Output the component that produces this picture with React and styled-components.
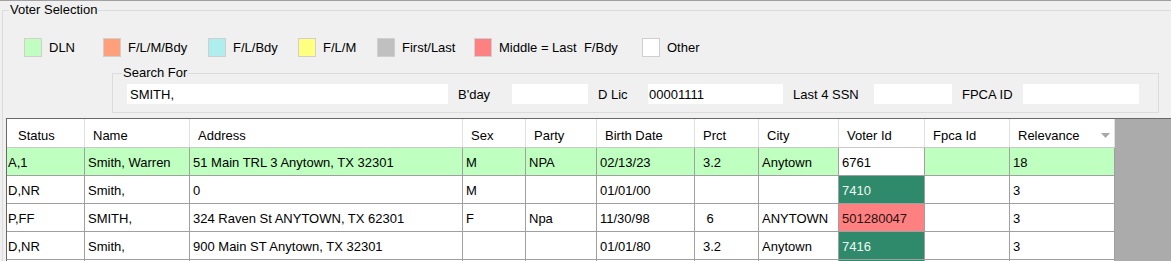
import React from "react";
import styled, { createGlobalStyle } from "styled-components";

const Global = createGlobalStyle`
  html, body { margin: 0; padding: 0; background: #f0f0f0; }
  body { font-family: "Liberation Sans", Arial, sans-serif; font-size: 13px; color: #000; }
  * { box-sizing: border-box; }
`;

const Page = styled.div`
  width: 1171px;
  height: 261px;
  overflow: hidden;
  background: #f0f0f0;
  border-top: 1px solid #a0a0a0;
`;

const GroupBox = styled.fieldset`
  margin: 1px 0 0 2px;
  padding: 0;
  width: 1190px;
  height: 400px;
  min-width: 0;
  border: 1px solid #dcdcdc;
`;

const GroupTitle = styled.legend`
  margin-left: ${(p) => p.$indent}px;
  padding: 0 1px;
  line-height: 16px;
  font-size: 13px;
  color: #000;
`;

const LegendRow = styled.div`
  display: flex;
  align-items: center;
  height: 18px;
  margin-top: 20px;
  padding-left: 21px;
`;

const LegendItem = styled.div`
  display: flex;
  align-items: center;
  gap: 7px;
  width: ${(p) => p.$w}px;
  flex: none;
  white-space: pre;
`;

const Swatch = styled.span`
  width: 18px;
  height: 19px;
  flex: none;
  background: ${(p) => p.$c};
  border: 1px solid #cfcfcf;
`;

const SearchBox = styled.fieldset`
  margin: 9px 0 0 109px;
  padding: 3px 0 8px 0;
  width: 1047px;
  min-width: 0;
  border: 1px solid #dcdcdc;
`;

const FieldRow = styled.div`
  display: flex;
  align-items: center;
  height: 20px;
  margin-left: 14px;
`;

const TextBox = styled.div`
  width: ${(p) => p.$w}px;
  height: 20px;
  flex: none;
  background: #fff;
  padding-left: ${(p) => p.$pad ?? 2}px;
  display: flex;
  align-items: center;
  white-space: pre;
`;

const FieldLabel = styled.span`
  width: ${(p) => p.$w}px;
  flex: none;
  padding-left: 10px;
  white-space: pre;
`;

const Grid = styled.div`
  margin: 5px 0 0 3px;
  width: 1200px;
  height: 200px;
  background: #ababab;
  border-top: 1px solid #696969;
  border-left: 1px solid #696969;
`;

const COLS = "78px 105px 273px 63px 71px 98px 64px 80px 86px 85px 105px";

const HeaderRow = styled.div`
  display: grid;
  grid-template-columns: ${COLS};
  width: 1108px;
  height: 29px;
  background: #fff;
  border-bottom: 1px solid #c8c8c8;
`;

const HeaderCell = styled.div`
  display: flex;
  align-items: center;
  justify-content: space-between;
  padding: 4px 4px 0 ${(p) => p.$pad ?? 8}px;
  border-right: 1px solid #e0e0e0;
  white-space: pre;
  overflow: hidden;
`;

const Row = styled.div`
  display: grid;
  grid-template-columns: ${COLS};
  width: 1108px;
  height: 28px;
  background: ${(p) => p.$bg || "#fff"};
  border-bottom: 1px solid #a0a0a0;
`;

const Cell = styled.div`
  display: flex;
  align-items: center;
  padding: 2px 0 0 ${(p) => p.$pad ?? 3}px;
  border-right: 1px solid #a0a0a0;
  background: ${(p) => p.$bg || "transparent"};
  color: ${(p) => p.$fg || "#000"};
  white-space: pre;
  overflow: hidden;
`;

const SortArrow = () => (
  <svg width="9" height="5" viewBox="0 0 9 5">
    <polygon points="0,0 9,0 4.5,5" fill="#a8a8a8" />
  </svg>
);

const legend = [
  { label: "DLN", c: "#c0ffc0", w: 79 },
  { label: "F/L/M/Bdy", c: "#ffa07a", w: 105 },
  { label: "F/L/Bdy", c: "#afeeee", w: 90 },
  { label: "F/L/M", c: "#ffff80", w: 79 },
  { label: "First/Last", c: "#c0c0c0", w: 97 },
  { label: "Middle = Last  F/Bdy", c: "#ff8080", w: 168 },
  { label: "Other", c: "#ffffff", w: 80 },
];

const headers = ["Status", "Name", "Address", "Sex", "Party", "Birth Date", "Prct", "City", "Voter Id", "Fpca Id", "Relevance"];

const GREEN = "#2e8a6b";
const SALMON = "#ff8080";

const rows = [
  {
    bg: "#bfffbf",
    cells: ["A,1", "Smith, Warren", "51 Main TRL 3 Anytown, TX 32301", "M", "NPA", "02/13/23", "3.2", "Anytown", "6761", "", "18"],
    voter: { bg: "#fff", fg: "#000" },
  },
  {
    cells: ["D,NR", "Smith,", "0", "M", "", "01/01/00", "", "", "7410", "", "3"],
    voter: { bg: GREEN, fg: "#eef8f2" },
  },
  {
    cells: ["P,FF", "SMITH,", "324 Raven St ANYTOWN, TX 62301", "F", "Npa", "11/30/98", " 6", "ANYTOWN", "501280047", "", "3"],
    voter: { bg: SALMON, fg: "#2a1010" },
  },
  {
    cells: ["D,NR", "Smith,", "900 Main ST Anytown, TX 32301", "", "", "01/01/80", "3.2", "Anytown", "7416", "", "3"],
    voter: { bg: GREEN, fg: "#eef8f2" },
  },
  {
    cells: ["", "", "", "", "", "", "", "", "", "", ""],
    voter: { bg: GREEN, fg: "#eef8f2" },
  },
];

const cellPad = (i) => (i === 0 ? 1 : i === 6 ? 8 : 3);

export default function App() {
  return (
    <>
      <Global />
      <Page>
        <GroupBox>
          <GroupTitle $indent={6}>Voter Selection</GroupTitle>
          <LegendRow>
            {legend.map((l) => (
              <LegendItem key={l.label} $w={l.w}>
                <Swatch $c={l.c} />
                <span>{l.label}</span>
              </LegendItem>
            ))}
          </LegendRow>
          <SearchBox>
            <GroupTitle $indent={9}>Search For</GroupTitle>
            <FieldRow>
              <TextBox $w={321} $pad={3}>SMITH,</TextBox>
              <FieldLabel $w={64}>B'day</FieldLabel>
              <TextBox $w={76} />
              <FieldLabel $w={60}>D Lic</FieldLabel>
              <TextBox $w={135} $pad={1}>00001111</TextBox>
              <FieldLabel $w={91}>Last 4 SSN</FieldLabel>
              <TextBox $w={78} />
              <FieldLabel $w={71}>FPCA ID</FieldLabel>
              <TextBox $w={116} />
            </FieldRow>
          </SearchBox>
          <Grid>
            <HeaderRow>
              {headers.map((h, i) => (
                <HeaderCell key={h} $pad={i === 0 ? 11 : 8}>
                  <span>{h}</span>
                  {h === "Relevance" && <SortArrow />}
                </HeaderCell>
              ))}
            </HeaderRow>
            {rows.map((r, ri) => (
              <Row key={ri} $bg={r.bg}>
                {r.cells.map((c, i) => (
                  <Cell
                    key={i}
                    $pad={cellPad(i)}
                    $bg={i === 8 ? r.voter.bg : undefined}
                    $fg={i === 8 ? r.voter.fg : undefined}
                  >
                    {c}
                  </Cell>
                ))}
              </Row>
            ))}
          </Grid>
        </GroupBox>
      </Page>
    </>
  );
}
